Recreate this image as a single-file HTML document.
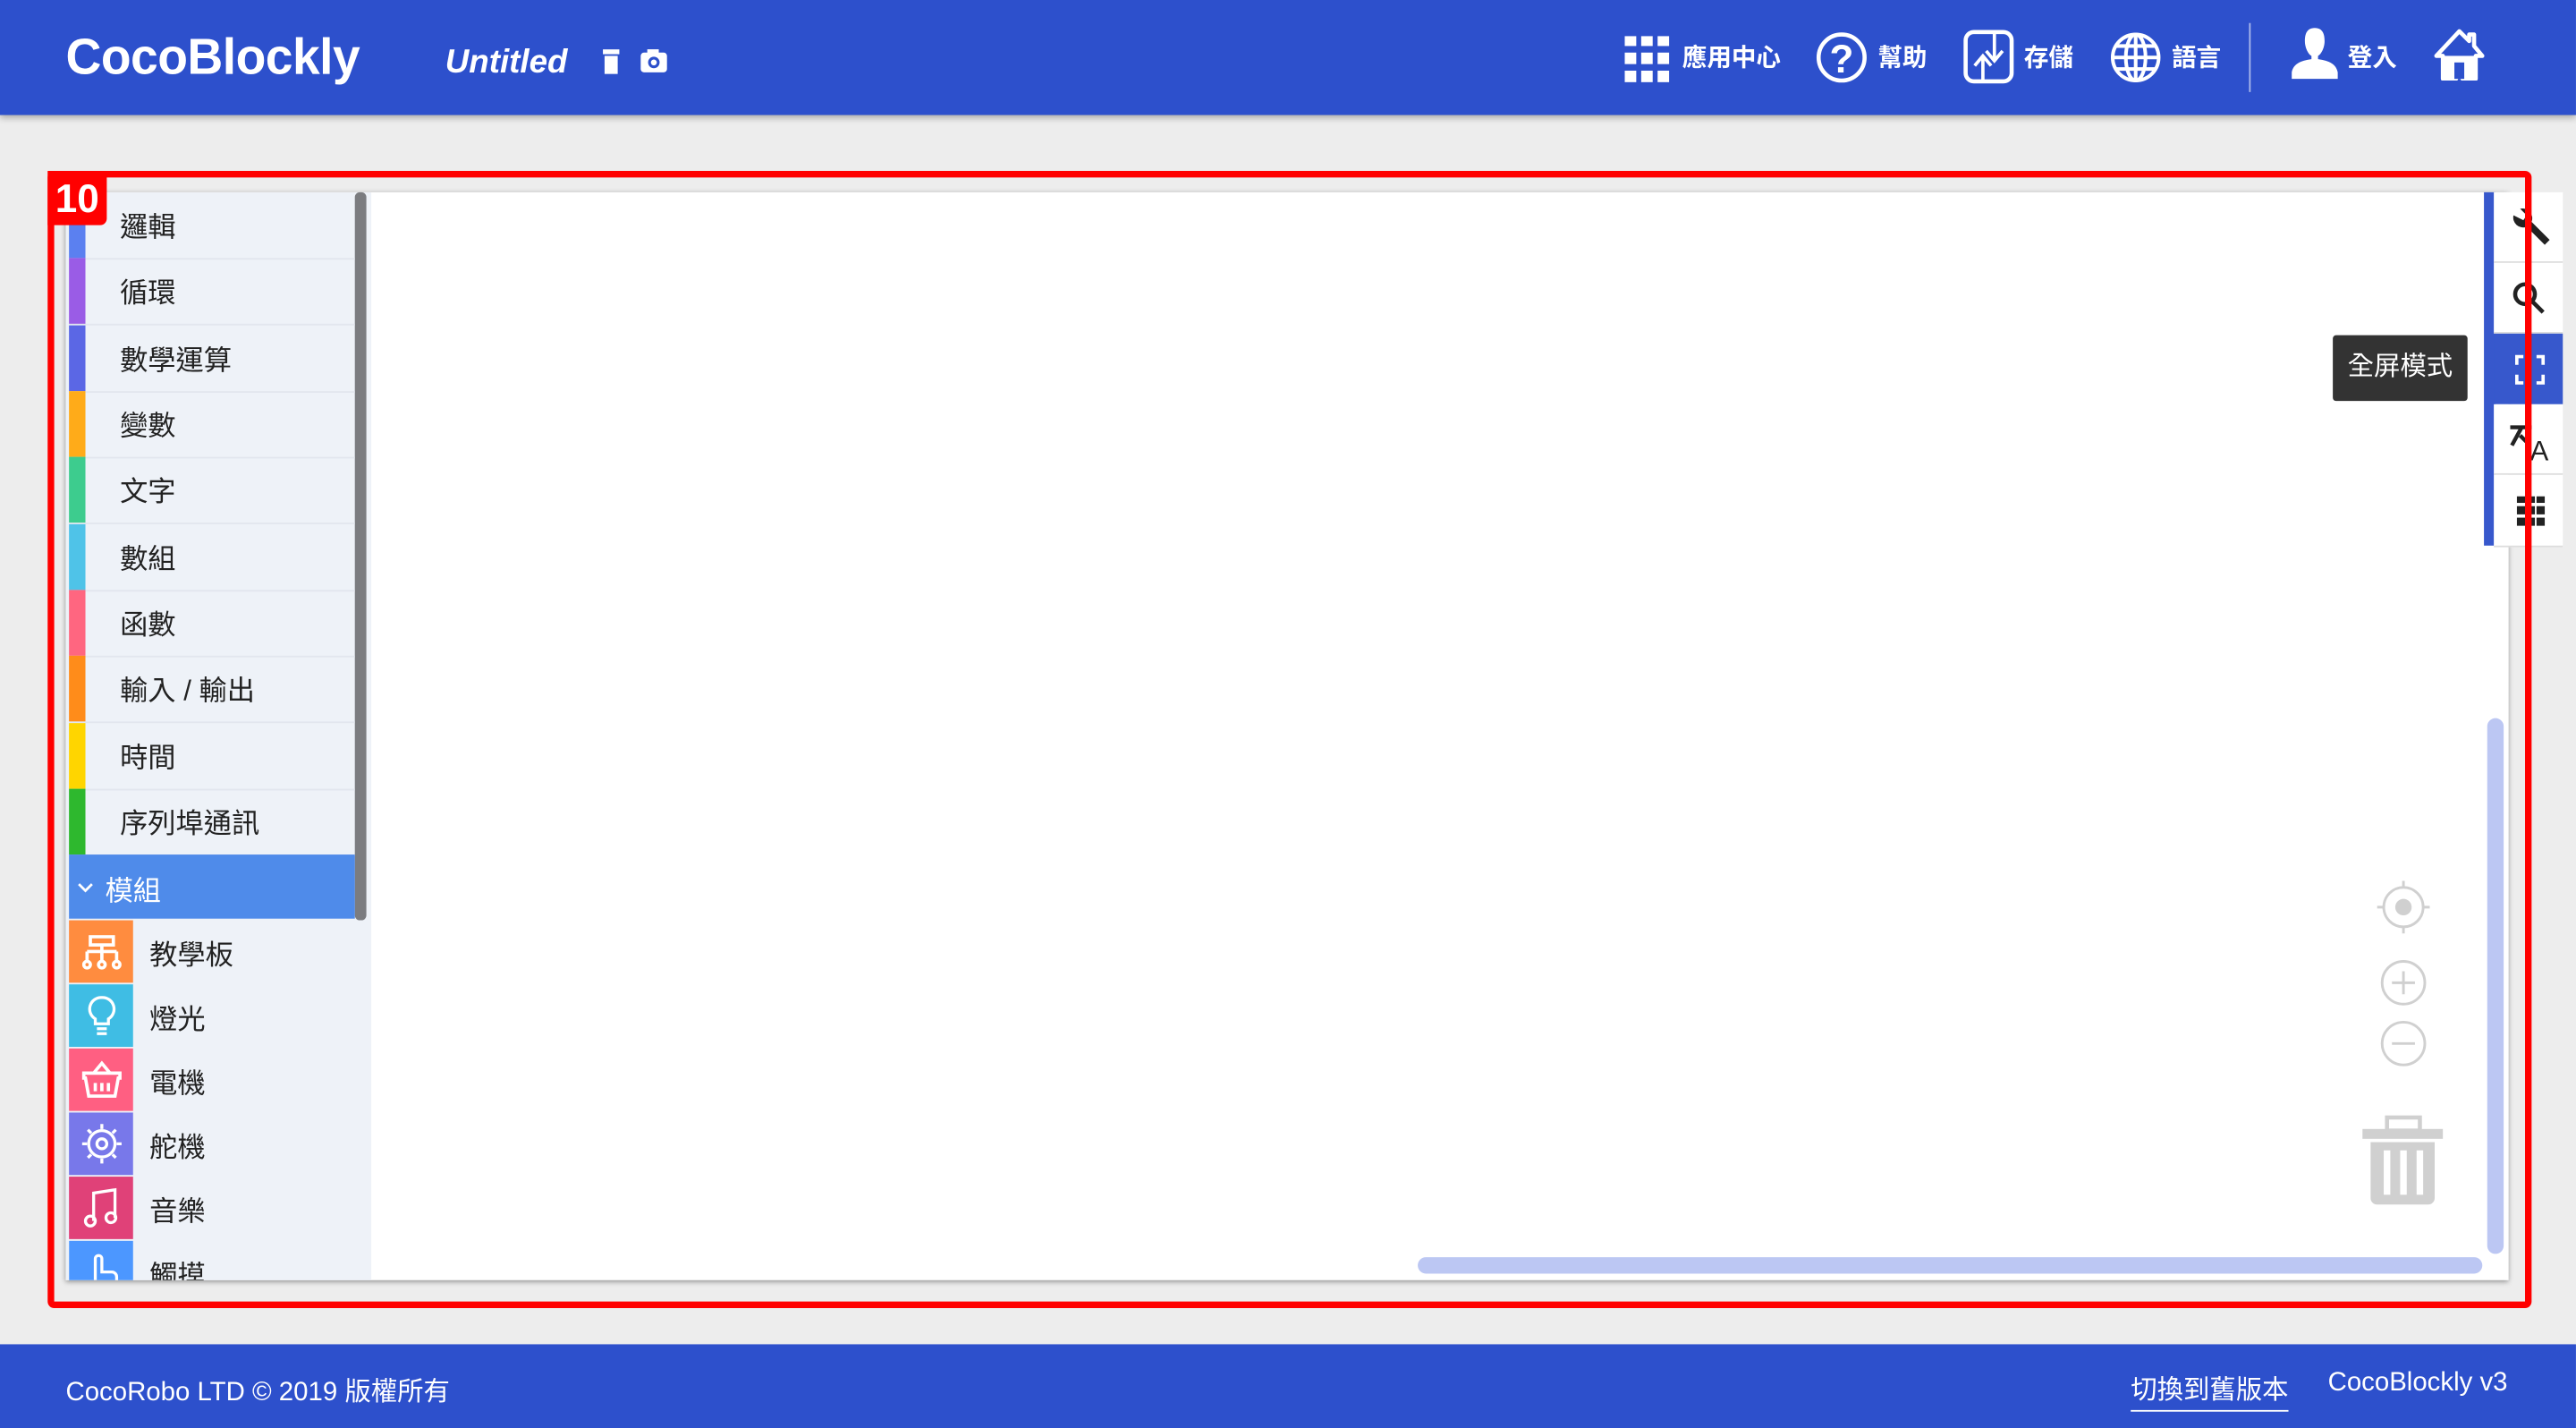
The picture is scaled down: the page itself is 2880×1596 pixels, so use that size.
<!DOCTYPE html>
<html><head><meta charset="utf-8"><style>
html,body{margin:0;padding:0;width:2880px;height:1596px;overflow:hidden;background:#ededed}
#w{position:absolute;left:0;top:0;width:1568px;height:869px;transform:scale(1.8367);transform-origin:0 0;font-family:"Liberation Sans","Noto Sans CJK TC",sans-serif;background:#ededed}
.a{position:absolute}
#hd{left:0;top:0;width:1568px;height:70px;background:#2d50cc;box-shadow:0 2px 4px rgba(0,0,0,.3)}
.nav{color:#fff;font-size:15px;top:24px;font-weight:bold}
#ft{left:0;top:818px;width:1568px;height:51px;background:#2d50cc;color:#fff;font-size:16px}
.cat{position:absolute;left:42px;width:174px;height:40px;border-bottom:1px solid #e2e6ee;font-size:17px;color:#222}
.cat i{position:absolute;left:0;top:0;width:10px;height:40px}
.cat span{position:absolute;left:31px;top:7px}
.mod{position:absolute;left:42px;width:174px;height:39px;font-size:17px;color:#222}
.mod b{position:absolute;left:0;top:0;width:39px;height:38px}
.mod span{position:absolute;left:49px;top:7px}
.tb{position:absolute;left:1518px;width:42px;height:42px;background:#fff;border-bottom:1px solid #ddd}
</style></head><body><div id="w">
<div id="hd" class="a">
 <div class="a" style="left:40px;top:17px;color:#fff;font-size:31px;font-weight:bold;letter-spacing:-0.3px;transform:scaleX(0.97);transform-origin:0 0">CocoBlockly</div>
 <div class="a" style="left:271px;top:27px;color:#fff;font-size:20px;font-style:italic;font-weight:bold">Untitled</div>
 <svg class="a" style="left:366px;top:30px" width="12" height="16"><rect x="1" y="0" width="10" height="3" fill="#fff"/><rect x="2" y="4" width="8" height="11" fill="#fff"/></svg>
 <svg class="a" style="left:389px;top:29px" width="18" height="16"><rect x="1" y="3" width="16" height="12" rx="2" fill="#fff"/><rect x="5" y="1" width="7" height="3" fill="#fff"/><circle cx="9" cy="9" r="3.5" fill="#2d50cc"/><circle cx="9" cy="9" r="1.8" fill="#fff"/></svg>
 <svg class="a" style="left:988px;top:21px" width="30" height="30"><g fill="#fff"><rect x="1" y="1" width="7" height="6"/><rect x="11" y="1" width="7" height="6"/><rect x="21" y="1" width="7" height="6"/><rect x="1" y="11" width="7" height="7"/><rect x="11" y="11" width="7" height="7"/><rect x="21" y="11" width="7" height="7"/><rect x="1" y="22" width="7" height="7"/><rect x="11" y="22" width="7" height="7"/><rect x="21" y="22" width="7" height="7"/></g></svg>
 <div class="a nav" style="left:1024px">應用中心</div>
 <svg class="a" style="left:1104px;top:18px" width="34" height="34"><circle cx="17" cy="17" r="14" fill="none" stroke="#fff" stroke-width="2.5"/><text x="17" y="26" text-anchor="middle" font-size="24" font-weight="bold" fill="#fff" font-family="Liberation Sans">?</text></svg>
 <div class="a nav" style="left:1143px">幫助</div>
 <svg class="a" style="left:1195px;top:18px" width="32" height="34"><rect x="1.5" y="1.5" width="28" height="30" rx="5" fill="none" stroke="#fff" stroke-width="2.5"/><path d="M19 2v16M14 13l5 6 5-6M12 32V17M7 22l5-6 5 6" fill="none" stroke="#fff" stroke-width="2"/></svg>
 <div class="a nav" style="left:1232px">存儲</div>
 <svg class="a" style="left:1283px;top:18px" width="34" height="34"><g fill="none" stroke="#fff" stroke-width="2.2"><circle cx="17" cy="17" r="14"/><ellipse cx="17" cy="17" rx="6" ry="14"/><path d="M17 3v28M3 17h28M5 10h24M5 24h24"/></g></svg>
 <div class="a nav" style="left:1322px">語言</div>
 <div class="a" style="left:1369px;top:14px;width:1px;height:42px;background:rgba(255,255,255,.6)"></div>
 <svg class="a" style="left:1393px;top:16px" width="32" height="34"><path d="M16 1c-5 0-6 4-6 8 0 4 2 8 4 9v2c-7 1-11 3-12 8v4h28v-4c-1-5-5-7-12-8v-2c2-1 4-5 4-9 0-4-1-8-6-8z" fill="#fff"/></svg>
 <div class="a nav" style="left:1429px">登入</div>
 <svg class="a" style="left:1480px;top:17px" width="34" height="32"><path d="M17 2L3 17h4v14h8v-9h4v9h8V17h4L26 11V4h-3v4z" fill="none" stroke="#fff" stroke-width="2.5" stroke-linejoin="round"/><rect x="8" y="17" width="18" height="14" fill="#fff"/><rect x="14" y="21" width="6" height="10" fill="#2d50cc"/></svg>
</div>

<div class="a" style="left:40px;top:117px;width:1487px;height:662px;background:#fff;box-shadow:0 1px 3px rgba(0,0,0,.4)"></div>
<div class="a" style="left:40px;top:117px;width:186px;height:662px;background:#eef2f8"></div>
<div class="a" style="left:216px;top:117px;width:7px;height:443px;background:#7b7c80;border-radius:3px"></div>
<div class="cat" style="top:117px"><i style="background:#5b80f0"></i><span>邏輯</span></div>
<div class="cat" style="top:157px"><i style="background:#9a5ce6"></i><span>循環</span></div>
<div class="cat" style="top:198px"><i style="background:#5b67e5"></i><span>數學運算</span></div>
<div class="cat" style="top:238px"><i style="background:#ffab19"></i><span>變數</span></div>
<div class="cat" style="top:278px"><i style="background:#3dcc8e"></i><span>文字</span></div>
<div class="cat" style="top:319px"><i style="background:#4fc3e8"></i><span>數組</span></div>
<div class="cat" style="top:359px"><i style="background:#ff6680"></i><span>函數</span></div>
<div class="cat" style="top:399px"><i style="background:#ff8c1a"></i><span>輸入 / 輸出</span></div>
<div class="cat" style="top:440px"><i style="background:#ffd500"></i><span>時間</span></div>
<div class="cat" style="top:480px"><i style="background:#2eb82e"></i><span>序列埠通訊</span></div>
<div class="a" style="left:42px;top:520px;width:174px;height:39px;background:#4f8bea;color:#fff;font-size:17px"><svg class="a" style="left:5px;top:17px" width="10" height="7"><path d="M1 1l4 4 4-4" fill="none" stroke="#fff" stroke-width="1.5"/></svg><span class="a" style="left:22px;top:8px">模組</span></div>
<div class="mod" style="top:560px"><b style="background:#ff8c3f"></b><span>教學板</span>
 <svg class="a" style="left:8px;top:9px" width="24" height="22"><g fill="none" stroke="#fff" stroke-width="2"><rect x="5" y="1" width="14" height="5"/><path d="M12 6v4M3 10h18M3 10v6M12 10v6M21 10v6"/><circle cx="3" cy="18" r="2"/><circle cx="12" cy="18" r="2"/><circle cx="21" cy="18" r="2"/></g></svg></div>
<div class="mod" style="top:599px"><b style="background:#3fbde4"></b><span>燈光</span>
 <svg class="a" style="left:10px;top:6px" width="20" height="26"><g fill="none" stroke="#fff" stroke-width="1.8"><path d="M10 2a7 7 0 0 0-4 13v3h8v-3a7 7 0 0 0-4-13z"/><path d="M7 21h6M7 24h6"/></g></svg></div>
<div class="mod" style="top:638px"><b style="background:#ff5f82"></b><span>電機</span>
 <svg class="a" style="left:7px;top:7px" width="26" height="24"><g fill="none" stroke="#fff" stroke-width="2"><path d="M2 8h22v3h-1l-2 11H5L3 11H2z"/><path d="M8 8l5-6 5 6M9 14v5M13 14v5M17 14v5"/></g></svg></div>
<div class="mod" style="top:677px"><b style="background:#7878ea"></b><span>舵機</span>
 <svg class="a" style="left:7px;top:6px" width="26" height="26"><g fill="none" stroke="#fff" stroke-width="1.8"><circle cx="13" cy="13" r="8"/><circle cx="13" cy="13" r="3"/><path d="M13 1v3M13 22v3M1 13h3M22 13h3M4.5 4.5l2 2M19.5 19.5l2 2M21.5 4.5l-2 2M4.5 21.5l2-2"/></g></svg></div>
<div class="mod" style="top:716px"><b style="background:#e04178"></b><span>音樂</span>
 <svg class="a" style="left:9px;top:6px" width="22" height="26"><g fill="none" stroke="#fff" stroke-width="1.8"><path d="M6 21V4l13-2v17"/><circle cx="4" cy="21" r="3"/><circle cx="16.5" cy="19" r="3"/></g></svg></div>
<div class="a" style="left:42px;top:755px;width:184px;height:24px;overflow:hidden"><div class="mod" style="left:0;top:0"><b style="background:#4c97ff"></b><span>觸摸</span>
 <svg class="a" style="left:9px;top:8px" width="22" height="20"><path d="M7 16V3a2 2 0 0 1 4 0v8h6a3 3 0 0 1 3 3v6" fill="none" stroke="#fff" stroke-width="1.8"/></svg></div></div>

<div class="a" style="left:1514px;top:437px;width:10px;height:326px;background:#bcc7f3;border-radius:5px"></div>
<div class="a" style="left:863px;top:765px;width:648px;height:10px;background:#bcc7f3;border-radius:5px"></div>

<svg class="a" style="left:1438px;top:528px" width="50" height="210"><g fill="none" stroke="#d0d0d0" stroke-width="1.6"><circle cx="25" cy="24" r="12"/><path d="M25 8v4M25 36v4M9 24h4M37 24h4"/><circle cx="25" cy="70" r="13"/><path d="M18 70h14M25 63v14"/><circle cx="25" cy="107" r="13"/><path d="M18 107h14"/></g><circle cx="25" cy="24" r="5" fill="#d0d0d0"/><g fill="#d0d0d0"><rect x="15" y="152" width="20" height="8" fill="none" stroke="#d0d0d0" stroke-width="2.5"/><rect x="0" y="159" width="49" height="6"/><path d="M5 167h39v34a4 4 0 0 1-4 4H9a4 4 0 0 1-4-4z"/></g><g fill="#fff"><rect x="13" y="172" width="4" height="27"/><rect x="23" y="172" width="4" height="27"/><rect x="33" y="172" width="4" height="27"/></g></svg>

<div class="a" style="left:1512px;top:117px;width:7px;height:215px;background:#3758cc"></div>
<div class="tb" style="top:117px"><svg class="a" style="left:8px;top:8px" width="28" height="28"><path d="M4 6a6 6 0 0 0 8 7l11 11 3-3-11-11a6 6 0 0 0-7-8l4 4-2 3z" fill="#222"/></svg></div>
<div class="tb" style="top:160px"><svg class="a" style="left:10px;top:10px" width="24" height="24"><circle cx="9" cy="9" r="6" fill="none" stroke="#222" stroke-width="2.5"/><path d="M13 13l7 7" stroke="#222" stroke-width="2.5"/></svg></div>
<div class="tb" style="top:203px;background:#3758cc;border-bottom:none;height:43px"><svg class="a" style="left:12px;top:12px" width="20" height="20"><path d="M6 2H2v5M14 2h4v5M2 13v5h4M18 13v5h-4" fill="none" stroke="#fff" stroke-width="2"/></svg></div>
<div class="tb" style="top:246px"><svg class="a" style="left:8px;top:8px" width="30" height="30"><path d="M2 6h13M9 6L3 17M8 11l6 6" fill="none" stroke="#222" stroke-width="2.4"/><text x="14" y="26" font-size="17" fill="#222" font-family="Liberation Sans">A</text></svg></div>
<div class="tb" style="top:289px;height:43px"><svg class="a" style="left:14px;top:13px" width="18" height="18"><g fill="#222"><rect x="0" y="0" width="5" height="4"/><rect x="6" y="0" width="5" height="4"/><rect x="12" y="0" width="5" height="4"/><rect x="0" y="6" width="5" height="5"/><rect x="6" y="6" width="5" height="5"/><rect x="12" y="6" width="5" height="5"/><rect x="0" y="13" width="5" height="5"/><rect x="6" y="13" width="5" height="5"/><rect x="12" y="13" width="5" height="5"/></g></svg></div>
<div class="a" style="left:1420px;top:204px;width:82px;height:40px;background:#333;border-radius:2px;color:#fff;font-size:16px;line-height:40px;text-align:center">全屏模式</div>

<div class="a" style="left:29px;top:104px;width:1504px;height:684px;border:4px solid #f00;border-radius:4px"></div>
<div class="a" style="left:29px;top:104px;width:36px;height:33px;background:#f00;border-radius:0 0 4px 0;color:#fff;font-size:24px;font-weight:bold;line-height:36px;text-align:center">10</div>

<div id="ft" class="a">
 <div class="a" style="left:40px;top:15px">CocoRobo LTD © 2019 版權所有</div>
 <div class="a" style="left:1297px;top:14px;border-bottom:1px solid #fff;padding-bottom:2px">切換到舊版本</div>
 <div class="a" style="left:1417px;top:15px">CocoBlockly v3</div>
</div>
</div></body></html>
